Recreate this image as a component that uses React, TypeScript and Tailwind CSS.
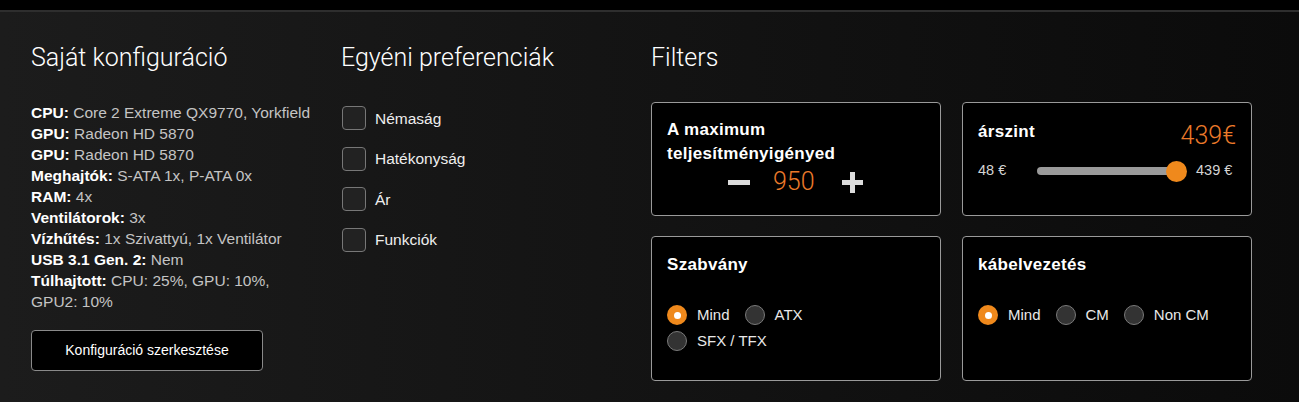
import React from 'react';

const SPECS: [string, string][] = [
  ['CPU:', 'Core 2 Extreme QX9770, Yorkfield'],
  ['GPU:', 'Radeon HD 5870'],
  ['GPU:', 'Radeon HD 5870'],
  ['Meghajtók:', 'S-ATA 1x, P-ATA 0x'],
  ['RAM:', '4x'],
  ['Ventilátorok:', '3x'],
  ['Vízhűtés:', '1x Szivattyú, 1x Ventilátor'],
  ['USB 3.1 Gen. 2:', 'Nem'],
  ['Túlhajtott:', 'CPU: 25%, GPU: 10%, GPU2: 10%'],
];

const PREFS = ['Némaság', 'Hatékonyság', 'Ár', 'Funkciók'];

function Radio({ label, checked }: { label: string; checked?: boolean }) {
  return (
    <label className="inline-flex h-[26px] items-center gap-[10px] text-[15px] text-[#e8e8e8]">
      {checked ? (
        <span className="flex h-[20px] w-[20px] items-center justify-center rounded-full bg-[#ef891c]">
          <span className="h-[7px] w-[7px] rounded-full bg-white" />
        </span>
      ) : (
        <span className="h-[20px] w-[20px] rounded-full border border-[#7a7a7a] bg-[#333]" />
      )}
      {label}
    </label>
  );
}

function Card({ children, tall }: { children: React.ReactNode; tall?: boolean }) {
  return (
    <div
      className={`rounded-[4px] border border-[#9a9a9a] bg-black px-[15px] ${
        tall ? 'h-[145px] pt-[16px]' : 'h-[114px] pt-[15px]'
      }`}
    >
      {children}
    </div>
  );
}

export default function App() {
  return (
    <div className="h-[402px] w-full bg-black font-['Liberation_Sans',Arial,sans-serif] text-white">
      <div className="h-[10px] bg-black" />
      <div className="h-[2px] bg-[#2e2e2e]" />
      <div className="flex h-[390px] bg-gradient-to-r from-[#1c1c1c] to-[#0b0b0b] pl-[31px] pt-[32px]">
        {/* saját konfiguráció */}
        <section className="w-[310px]">
          <h2 className="font-['Roboto',sans-serif] text-[25px] leading-[28px] font-light">Saját konfiguráció</h2>
          <ul className="mt-[30px] w-[284px] text-[15.5px] leading-[21px] text-[#c4c4c4]">
            {SPECS.map(([k, v], i) => (
              <li key={i}>
                <b className="font-bold text-white">{k}</b> {v}
              </li>
            ))}
          </ul>
          <button className="mt-[18px] h-[41px] w-[232px] rounded-[4px] border border-[#8a8a8a] bg-black text-[14px] text-white">
            Konfiguráció szerkesztése
          </button>
        </section>

        {/* egyéni preferenciák */}
        <section className="w-[310px]">
          <h2 className="font-['Roboto',sans-serif] text-[25px] leading-[28px] font-light">Egyéni preferenciák</h2>
          <ul className="mt-[26px]">
            {PREFS.map((p) => (
              <li key={p} className="flex h-[40.5px] items-center gap-[9px] text-[15.5px] text-[#eee]">
                <span className="ml-px h-[24px] w-[24px] rounded-[4px] border border-[#777] bg-[#222]" />
                {p}
              </li>
            ))}
          </ul>
        </section>

        {/* filters */}
        <section>
          <h2 className="font-['Roboto',sans-serif] text-[25px] leading-[28px] font-light">Filters</h2>
          <div className="mt-[30px] grid grid-cols-[290px_290px] gap-x-[21px] gap-y-[20px]">
            <Card>
              <div className="w-[200px] text-[17px] leading-[24px] font-bold tracking-[0.3px]">
                A maximum teljesítményigényed
              </div>
              <div className="mt-[1px] flex h-[30px] items-center pl-[61px]">
                <svg width="22" height="22" viewBox="0 0 22 22">
                  <rect x="0" y="9" width="22" height="5" fill="#dcdcdc" />
                </svg>
                <span className="ml-[23px] w-[45px] font-['Roboto',sans-serif] text-[25px] leading-[30px] font-light text-[#ec7a2a]">
                  950
                </span>
                <svg className="ml-[24px]" width="21" height="21" viewBox="0 0 21 21">
                  <rect x="0" y="8" width="21" height="5" fill="#dcdcdc" />
                  <rect x="8" y="0" width="5" height="21" fill="#dcdcdc" />
                </svg>
              </div>
            </Card>
            <Card>
              <div className="flex items-start justify-between">
                <span className="mt-[2px] text-[17px] leading-[24px] font-bold tracking-[0.3px]">árszint</span>
                <span className="mt-[3px] font-['Roboto',sans-serif] text-[25px] leading-[30px] font-light text-[#ec7a2a]">
                  439€
                </span>
              </div>
              <div className="mt-[9px] flex items-center text-[14.5px] text-[#d4d4d4]">
                <span className="w-[59px]">48 €</span>
                <div className="relative h-[8px] w-[140px] rounded-full bg-[#9a9a9a]">
                  <span className="absolute right-[-10px] top-[-6px] h-[21px] w-[21px] rounded-full bg-[#ef891c]" />
                </div>
                <span className="ml-[19px]">439 €</span>
              </div>
            </Card>
            <Card tall>
              <div className="text-[17px] leading-[24px] font-bold tracking-[0.3px]">Szabvány</div>
              <div className="mt-[25px] flex w-[200px] flex-wrap gap-x-[15px]">
                <Radio label="Mind" checked />
                <Radio label="ATX" />
                <Radio label="SFX / TFX" />
              </div>
            </Card>
            <Card tall>
              <div className="text-[17px] leading-[24px] font-bold tracking-[0.3px]">kábelvezetés</div>
              <div className="mt-[25px] flex flex-wrap gap-x-[15px]">
                <Radio label="Mind" checked />
                <Radio label="CM" />
                <Radio label="Non CM" />
              </div>
            </Card>
          </div>
        </section>
      </div>
    </div>
  );
}
